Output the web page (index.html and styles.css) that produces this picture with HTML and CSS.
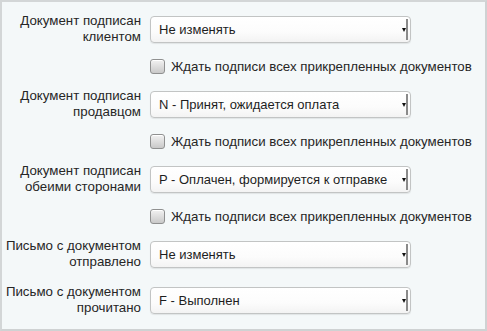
FILE: index.html
```html
<!DOCTYPE html>
<html lang="ru">
<head>
<meta charset="utf-8">
<title>Статусы</title>
<link rel="stylesheet" href="styles.css">
</head>
<body>
<div class="panel">
  <div class="row">
    <label class="lbl">Документ подписан<br>клиентом</label>
    <div class="sel"><select><option>Не изменять</option></select><span class="bar"></span></div>
  </div>
  <div class="check"><input type="checkbox"><span>Ждать подписи всех прикрепленных документов</span></div>
  <div class="row">
    <label class="lbl">Документ подписан<br>продавцом</label>
    <div class="sel"><select><option>N - Принят, ожидается оплата</option></select><span class="bar"></span></div>
  </div>
  <div class="check"><input type="checkbox"><span>Ждать подписи всех прикрепленных документов</span></div>
  <div class="row">
    <label class="lbl">Документ подписан<br>обеими сторонами</label>
    <div class="sel"><select><option>P - Оплачен, формируется к отправке</option></select><span class="bar"></span></div>
  </div>
  <div class="check"><input type="checkbox"><span>Ждать подписи всех прикрепленных документов</span></div>
  <div class="row">
    <label class="lbl">Письмо с документом<br>отправлено</label>
    <div class="sel"><select><option>Не изменять</option></select><span class="bar"></span></div>
  </div>
  <div class="row">
    <label class="lbl">Письмо с документом<br>прочитано</label>
    <div class="sel"><select><option>F - Выполнен</option></select><span class="bar"></span></div>
  </div>
</div>
</body>
</html>
```

FILE: styles.css
```css
html, body {
  margin: 0;
  padding: 0;
}
body {
  font-family: "Liberation Sans", Arial, sans-serif;
  font-size: 13.3px;
  color: #262626;
  background: #ffffff;
}
.panel {
  box-sizing: border-box;
  width: 487px;
  height: 331px;
  border: 2px solid #d3d6d7;
  border-right-color: #cfd2d3;
  border-bottom-color: #cfd2d3;
  background: #f4f8f9;
  padding-top: 11px;
  display: flex;
  flex-direction: column;
  gap: 14px;
}
.row {
  display: flex;
  align-items: center;
  gap: 9px;
  height: 32px;
}
.lbl {
  width: 139px;
  text-align: right;
  line-height: 16px;
  flex: none;
}
.sel {
  position: relative;
  width: 261px;
  height: 27px;
  flex: none;
}
.sel select {
  appearance: none;
  -webkit-appearance: none;
  box-sizing: border-box;
  width: 100%;
  height: 100%;
  margin: 0;
  border: 1px solid #c2c4c4;
  border-radius: 4px;
  background: linear-gradient(#ffffff, #fcfcfc 60%, #f3f3f3);
  box-shadow: 0 1px 1px rgba(0,0,0,0.08);
  font-family: "Liberation Sans", Arial, sans-serif;
  font-size: 13px;
  color: #1e1e1e;
  padding: 0 10px 0 8px;
  outline: none;
}
.sel .bar {
  position: absolute;
  right: 3px;
  top: 3px;
  bottom: 3px;
  width: 2px;
  background: #8a8a8a;
  pointer-events: none;
}
.sel::after {
  content: "";
  position: absolute;
  right: 5px;
  top: 12px;
  border-left: 2.5px solid transparent;
  border-right: 2.5px solid transparent;
  border-top: 4px solid #111;
  pointer-events: none;
}
.check {
  display: flex;
  align-items: center;
  gap: 6px;
  height: 15px;
  padding-left: 148px;
}
.check input {
  appearance: none;
  -webkit-appearance: none;
  margin: 0;
  width: 15px;
  height: 15px;
  box-sizing: border-box;
  border: 1px solid #8f9090;
  border-radius: 3px;
  background: linear-gradient(#f2f2f2, #c9c9c9);
  box-shadow: inset 0 1px 0 #ffffff;
  flex: none;
}
```
